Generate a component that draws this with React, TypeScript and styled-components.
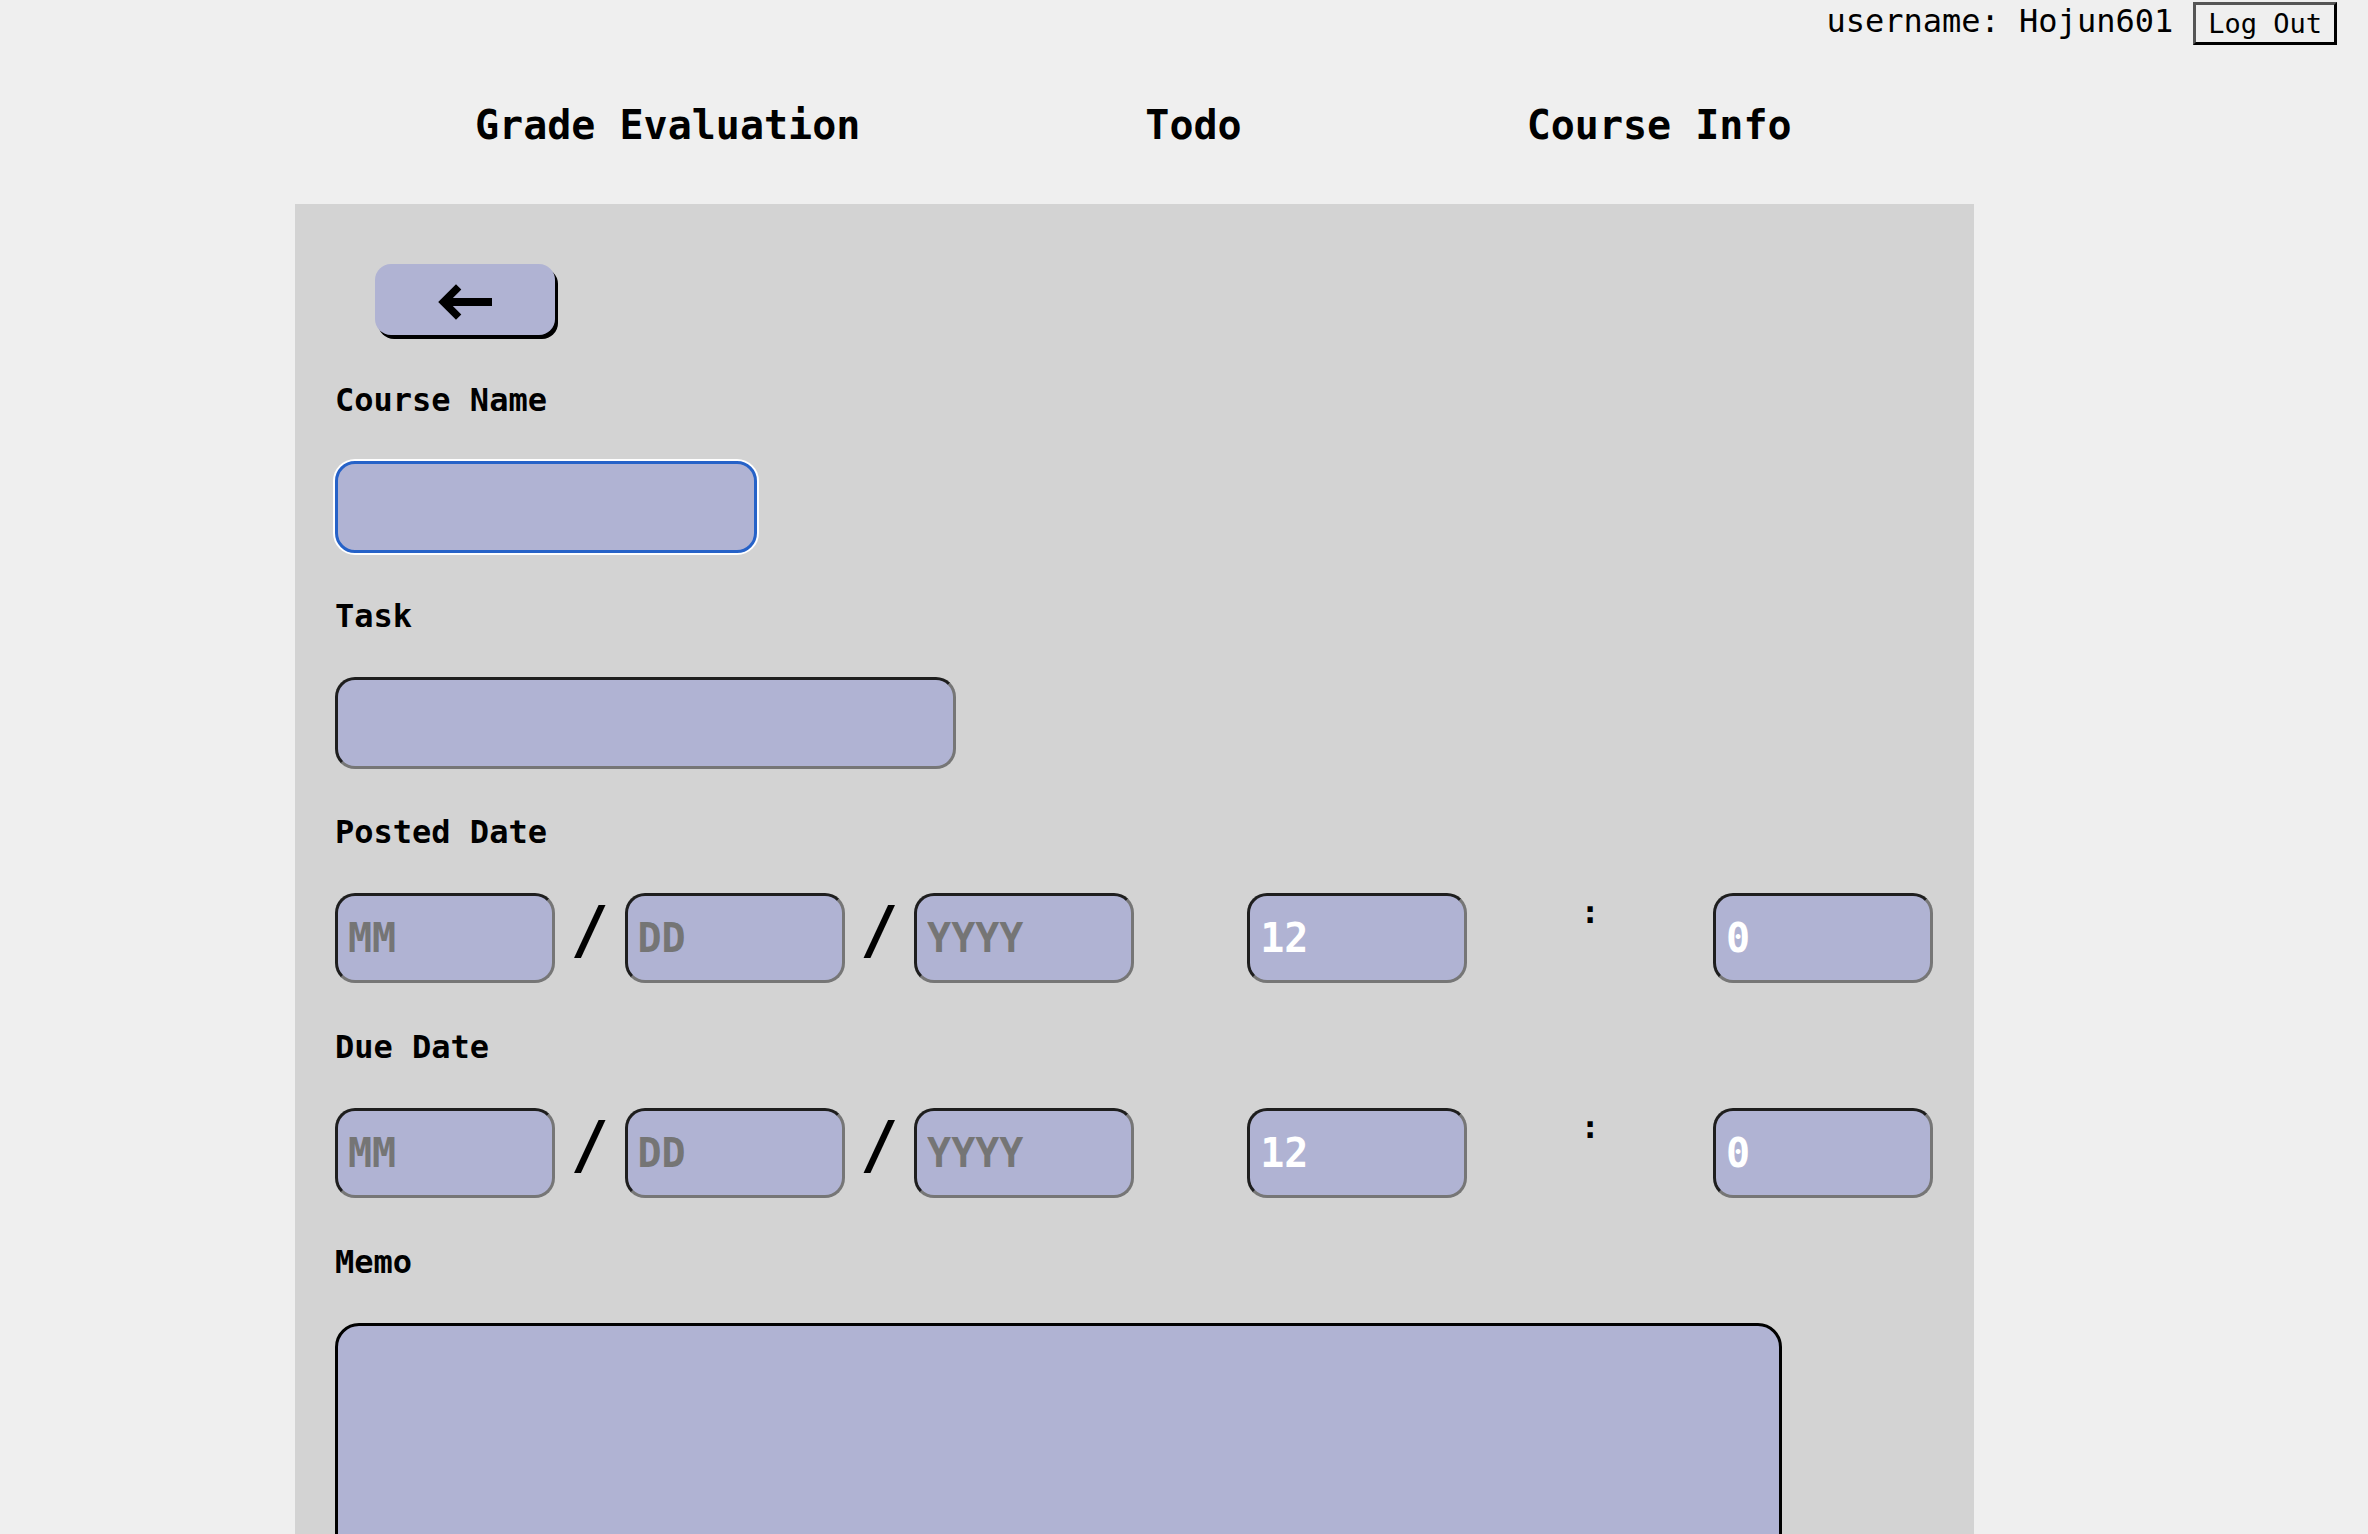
import React from "react";
import styled, { createGlobalStyle, css } from "styled-components";

const GlobalStyle = createGlobalStyle`
  html, body {
    margin: 0;
    padding: 0;
    overflow: hidden;
    background: #efefef;
  }
  body {
    font-family: "DejaVu Sans Mono", "Liberation Mono", monospace;
    color: #000;
  }
  * { box-sizing: border-box; }
`;

const Page = styled.div`
  min-height: 100vh;
`;

const TopBar = styled.header`
  display: flex;
  justify-content: flex-end;
  align-items: flex-start;
  gap: 20px;
  height: 47px;
  padding: 2px 31px 0 0;
`;

const Username = styled.span`
  font-size: 32px;
  line-height: normal;
`;

const LogOutButton = styled.button`
  height: 43px;
  padding: 0 12px;
  font-family: inherit;
  font-size: 27px;
  line-height: 1;
  color: #000;
  background: #efefef;
  border: 3px solid;
  border-color: #555 #000 #000 #555;
  cursor: pointer;
`;

const Nav = styled.nav`
  display: flex;
  gap: 285px;
  padding: 55px 0 56px 475px;
`;

const NavItem = styled.a`
  font-size: 40px;
  font-weight: bold;
  line-height: normal;
  color: #000;
  text-decoration: none;
  cursor: pointer;
`;

const Panel = styled.main`
  margin-left: 295px;
  width: 1679px;
  min-height: 1400px;
  background: #d3d3d3;
  padding: 60px 41px 0 40px;
`;

const BackButton = styled.button`
  display: flex;
  align-items: center;
  justify-content: center;
  width: 180px;
  height: 71px;
  margin: 0 0 46px 40px;
  padding: 4px 0 0;
  background: #b0b3d3;
  border: none;
  border-radius: 16px;
  box-shadow: 3px 4px 0 #000;
  cursor: pointer;
`;

const FieldLabel = styled.label`
  display: block;
  font-size: 32px;
  font-weight: bold;
  line-height: normal;
  margin: 0 0 42px;
`;

const inputBase = css`
  display: block;
  height: 92px;
  padding: 0 10px;
  background: #b0b3d3;
  border: 3px solid;
  border-color: #1e1e1e #767676 #767676 #1e1e1e;
  border-radius: 20px;
  font-family: inherit;
  font-size: 40px;
  font-weight: bold;
  color: #fff;
  outline: none;
  &::placeholder {
    color: #757575;
  }
`;

const TextInput = styled.input<{ $width: number; $focused?: boolean }>`
  ${inputBase}
  width: ${(p) => p.$width}px;
  margin: 0 0 44px;
  ${(p) =>
    p.$focused &&
    css`
      border-color: #2662c8;
      box-shadow: 0 0 0 2px #fff;
    `}
`;

const DateRow = styled.div`
  display: flex;
  justify-content: space-between;
  align-items: flex-start;
  margin: 2px 0 45px;
`;

const DateGroup = styled.div`
  display: flex;
  align-items: flex-start;
`;

const DateInput = styled.input`
  ${inputBase}
  width: 220px;
  height: 90px;
`;

const Slash = styled.span`
  font-size: 64px;
  font-weight: bold;
  line-height: normal;
  margin: 0 15.5px;
`;

const Colon = styled.span`
  font-size: 32px;
  font-weight: bold;
  line-height: normal;
`;

const Memo = styled.textarea`
  display: block;
  width: 1447px;
  height: 420px;
  background: #b0b3d3;
  border: 3px solid #000;
  border-radius: 24px;
  resize: none;
  outline: none;
  font-family: inherit;
  font-size: 32px;
  padding: 10px;
`;

const BackArrow = () => (
  <svg width="56" height="36" viewBox="0 0 56 36" aria-hidden="true">
    <path d="M55 18H9" stroke="#000" strokeWidth="8" fill="none" />
    <path d="M19 5.5L6.5 18L19 30.5" stroke="#000" strokeWidth="7.5" fill="none" strokeLinecap="square" />
  </svg>
);

const DateTimeRow: React.FC<{ id: string }> = ({ id }) => (
  <DateRow>
    <DateGroup>
      <DateInput id={`${id}-mm`} placeholder="MM" />
      <Slash>/</Slash>
      <DateInput placeholder="DD" />
      <Slash>/</Slash>
      <DateInput placeholder="YYYY" />
    </DateGroup>
    <DateInput defaultValue="12" />
    <Colon>:</Colon>
    <DateInput defaultValue="0" />
  </DateRow>
);

export default function App() {
  return (
    <Page>
      <GlobalStyle />
      <TopBar>
        <Username>username: Hojun601</Username>
        <LogOutButton>Log Out</LogOutButton>
      </TopBar>
      <Nav>
        <NavItem>Grade Evaluation</NavItem>
        <NavItem>Todo</NavItem>
        <NavItem>Course Info</NavItem>
      </Nav>
      <Panel>
        <BackButton aria-label="Back">
          <BackArrow />
        </BackButton>
        <FieldLabel htmlFor="course-name">Course Name</FieldLabel>
        <TextInput id="course-name" $width={422} $focused />
        <FieldLabel htmlFor="task">Task</FieldLabel>
        <TextInput id="task" $width={621} />
        <FieldLabel htmlFor="posted-mm">Posted Date</FieldLabel>
        <DateTimeRow id="posted" />
        <FieldLabel htmlFor="due-mm">Due Date</FieldLabel>
        <DateTimeRow id="due" />
        <FieldLabel htmlFor="memo">Memo</FieldLabel>
        <Memo id="memo" />
      </Panel>
    </Page>
  );
}
